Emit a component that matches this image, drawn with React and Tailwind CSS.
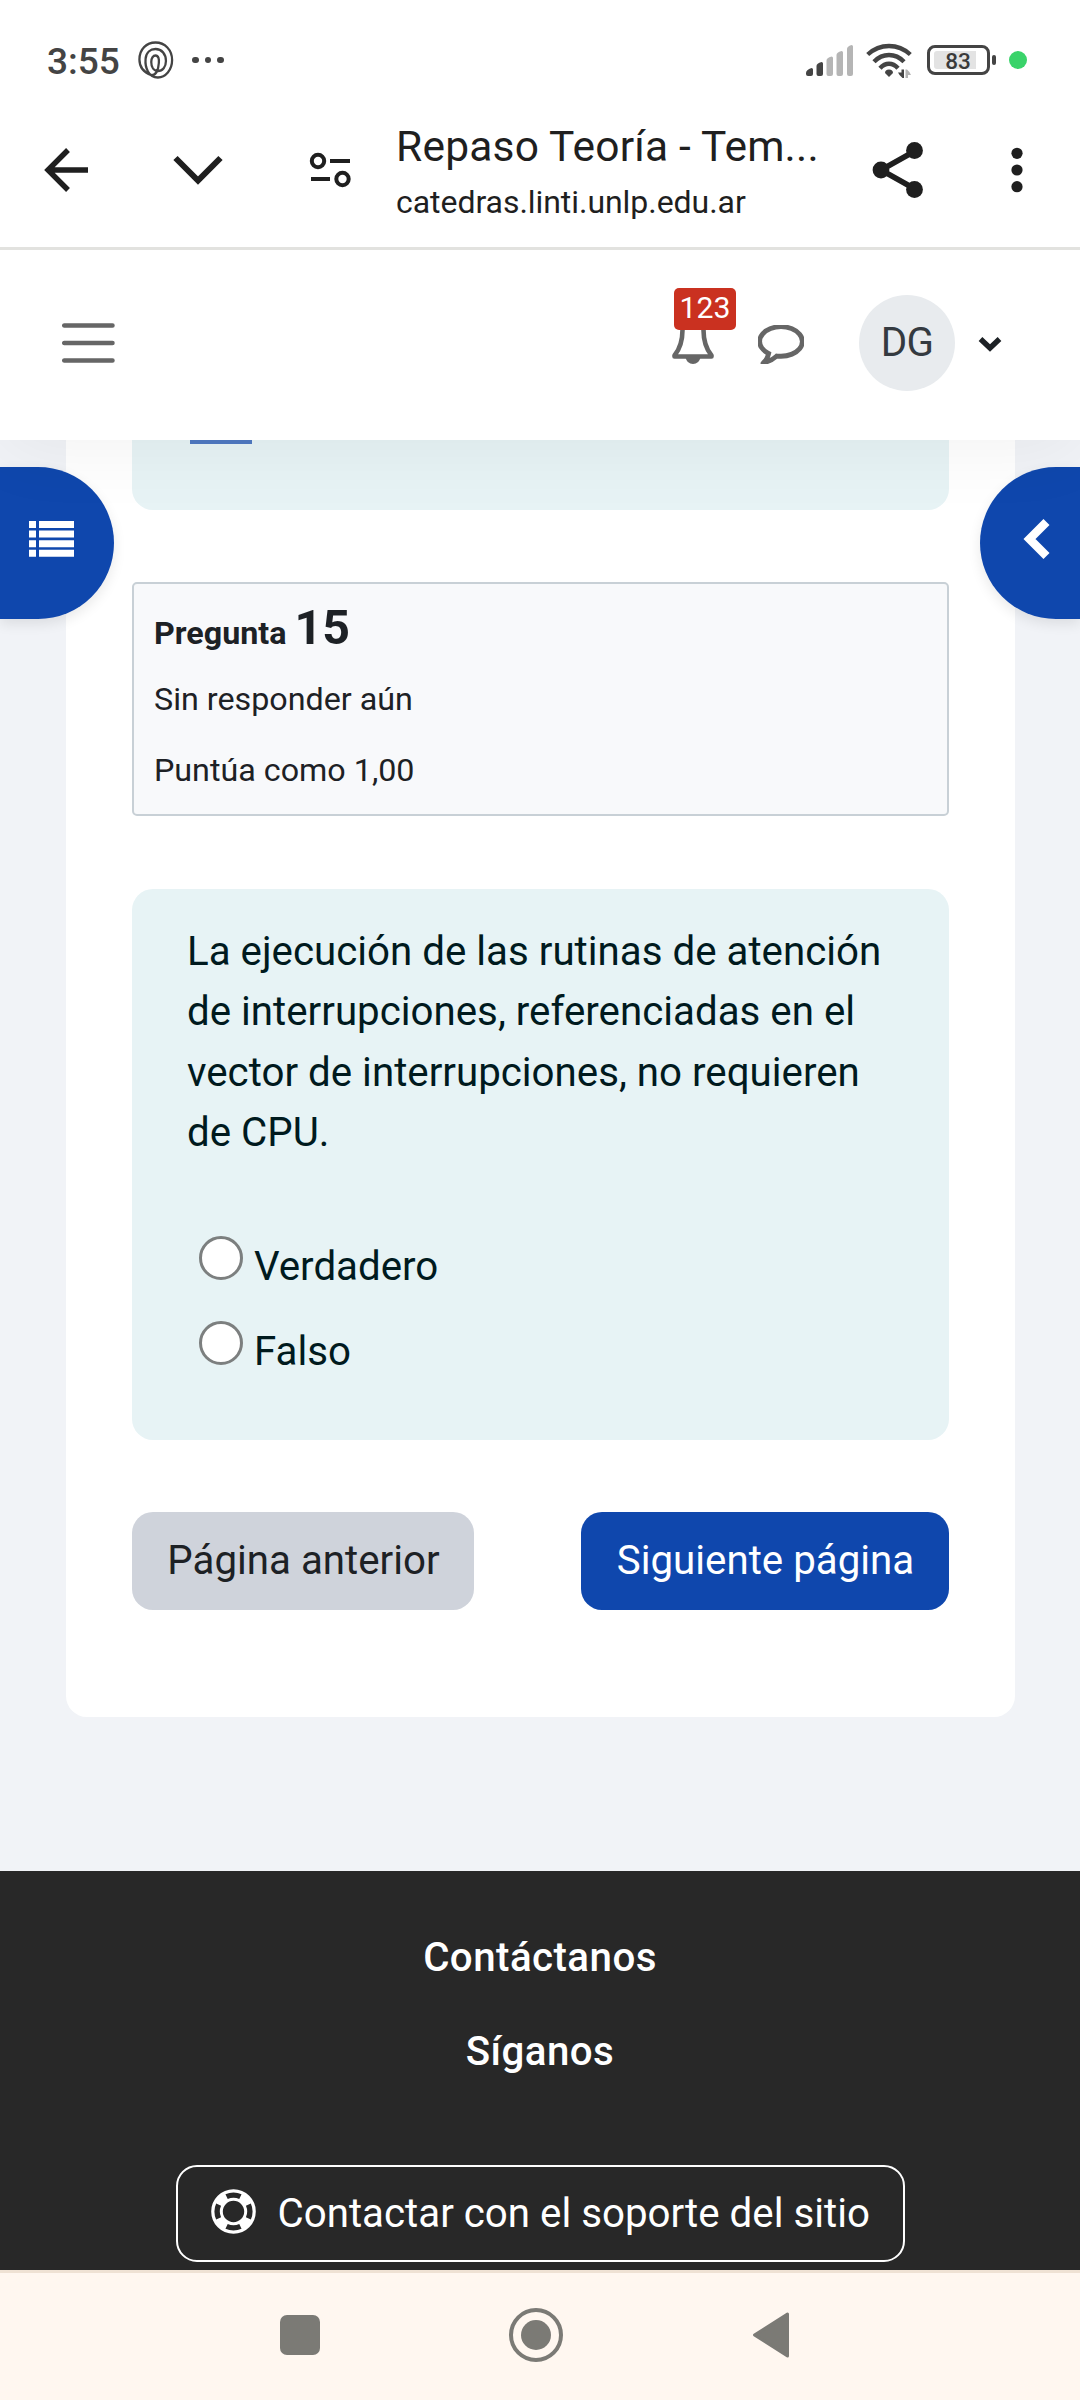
import React from "react";

function StatusBar() {
  return (
    <div className="flex h-[122px] items-center justify-between bg-white pl-[47px] pr-[53px] text-[#444]">
      <div className="flex items-center">
        <span className="w-[91px] whitespace-nowrap pt-[2px] text-[37px] font-medium leading-[44px]">3:55</span>
        <svg className="mt-[-2px] h-[38px] w-[36px]" viewBox="0 0 38 38" preserveAspectRatio="none" fill="none" stroke="#444" strokeWidth="2.4">
          <path d="M14 34C5 31 1.500 25 1.500 18.500C1.500 8 9 1.500 18.500 1.500C28.500 1.500 36 9 36 19C36 29 29 36.500 21 36.500C16 36.500 12.500 34 10.500 30.500C8.500 27 7.500 23 8 18C8.500 11.500 13 8 18.500 8C25 8 29.500 13 29.500 20C29.500 26 26 30 21 30C16.500 30 14 26 14 21C14 17 16 14.500 18.500 14.500C21.500 14.500 22.500 18 22 22C21.500 29 19 35 13.500 34Z" />
        </svg>
        <div className="ml-[18px] mt-[-2px] flex gap-[6px]">
          <i className="size-[6.500px] rounded-full bg-[#444]" />
          <i className="size-[6.500px] rounded-full bg-[#444]" />
          <i className="size-[6.500px] rounded-full bg-[#444]" />
        </div>
      </div>
      <div className="mt-[-2px] flex items-center">
        <svg className="h-[31px] w-[48px]" viewBox="0 0 48 31">
          <path fill="#444" d="M0 28q0-3 5.500-5q1.500 0 1.500 1.500v4.500q0 2-2 2H2q-2 0-2-2zM10.500 21q0-2.500 5-4q1.500 0 1.500 1.500V29q0 2-2 2h-2.500q-2 0-2-2z" />
          <path fill="#b5b5b5" d="M20.500 15.500q0-2.500 5-4q1.500 0 1.500 1.500V29q0 2-2 2h-2.500q-2 0-2-2zM30.500 10q0-2.500 5-4q1.500 0 1.500 1.500V29q0 2-2 2h-2.500q-2 0-2-2zM41 4q0-2.500 4.500-4q1.500 0 1.500 1.500V29q0 2-2 2H43q-2 0-2-2z" />
        </svg>
        <svg className="ml-[12px] mt-[1px] h-[35px] w-[47px]" viewBox="0 0 47 35">
          <g fill="none" stroke="#444" strokeWidth="4.400">
            <path d="M1.700 11.500Q11 3 23 3Q35 3 44.300 11.500" />
            <path d="M8 18.700Q14.500 12 23 12Q31.500 12 38 18.700" />
            <path d="M14 25.200Q18 20.700 23 20.700Q28 20.700 32 25.200" />
          </g>
          <path fill="#444" d="M19 30q0-3.500 4-3.500t4 3.500l-4 4z" />
          <path fill="#444" d="M35.500 26.500h2.500V35h-1.500q-3.500-3-4.500-5.500h3.500z" />
          <path fill="#b5b5b5" d="M39.500 26.500h1.500q3 2.500 4 5.500h-3v3h-2.500z" />
        </svg>
        <div className="ml-[14px] flex h-[30px] w-[63px] items-center rounded-[8px] border-[3px] border-[#444] pl-[3.500px]">
          <span className="h-[18px] w-[42px] rounded-l-[3px] bg-[#e3e3e3] text-center text-[22.500px] font-medium leading-[20px] text-[#3a3a3a]">
            <span className="ml-[7px]">83</span>
          </span>
        </div>
        <i className="ml-[2px] h-[10px] w-[4px] rounded-[2px] bg-[#444]" />
        <i className="ml-[13px] size-[18px] rounded-full bg-[#3ad36a]" />
      </div>
    </div>
  );
}

function BrowserBar() {
  return (
    <div className="relative z-30 flex h-[128px] items-center border-b-[3px] border-[#e2e2df] bg-white pl-[44px] text-[#1f1f1f]">
      <svg className="mt-[-29px] h-[46px] w-[46px]" viewBox="0 0 46 46" fill="none" stroke="#1f1f1f" strokeWidth="5.400">
        <path d="M44 23H5M24 3L4 23L24 43" />
      </svg>
      <svg className="ml-[83px] mt-[-29px] h-[34px] w-[50px]" viewBox="0 0 50 34" fill="none" stroke="#1f1f1f" strokeWidth="6">
        <path d="M2.500 5L25 27.500L47.500 5" />
      </svg>
      <svg className="ml-[85px] mt-[-29px] h-[38px] w-[44px]" viewBox="0 0 44 38" fill="none" stroke="#1f1f1f" strokeWidth="4">
        <circle cx="10" cy="10" r="6.200" />
        <path d="M22 10h20M3 28h19" />
        <circle cx="34.500" cy="28" r="6.200" />
      </svg>
      <div className="ml-[44px] mt-[-22px] w-[434px] whitespace-nowrap">
        <div className="text-[42.500px] leading-[52px] tracking-[0.200px]">Repaso Teoría - Tem...</div>
        <div className="mt-[5px] text-[32px] leading-[48px] tracking-[-0.050px]">catedras.linti.unlp.edu.ar</div>
      </div>
      <svg className="ml-[41px] mt-[-29px] h-[56px] w-[54px]" viewBox="0 0 54 56" fill="#1f1f1f">
        <path d="M44 9L10 28L44 47" fill="none" stroke="#1f1f1f" strokeWidth="5.500" />
        <circle cx="10" cy="28" r="8.400" />
        <circle cx="43.500" cy="8.500" r="8.400" />
        <circle cx="43.500" cy="47.500" r="8.400" />
      </svg>
      <svg className="ml-[86px] mt-[-29px] h-[46px] w-[12px]" viewBox="0 0 12 46" fill="#1f1f1f">
        <circle cx="6" cy="6.300" r="5.600" />
        <circle cx="6" cy="23" r="5.600" />
        <circle cx="6" cy="39.700" r="5.600" />
      </svg>
    </div>
  );
}

function SiteHeader() {
  return (
    <header className="relative z-20 flex h-[190px] items-center bg-white pb-[4px] pl-[62px] shadow-[0_10px_75px_rgba(0,0,0,0.055)]">
      <svg className="h-[42px] w-[53px]" viewBox="0 0 53 42" stroke="#666" strokeWidth="4.500" strokeLinecap="round">
        <path d="M2.200 3.500h48.300M2.200 21h48.300M2.200 38.500h48.300" />
      </svg>
      <div className="relative ml-[557px] h-[42px] w-[42px]">
        <svg className="h-[42px] w-[42px]" viewBox="0 0 42 42" fill="none" stroke="#666" strokeWidth="4.600" strokeLinejoin="round">
          <path d="M10.500 4V8C10.500 21 7 28 2.500 33.500V34.500H39.500V33.500C35 28 31.500 21 31.500 8V4" />
          <path d="M13.500 35.500h15q-1.500 6.500-7.500 6.500t-7.500-6.500z" fill="#666" stroke="none" />
        </svg>
        <span className="absolute left-[2px] top-[-34px] h-[42px] w-[62px] rounded-[5px] bg-[#ca3120] text-center text-[30.200px] leading-[40px] text-white">123</span>
      </div>
      <svg className="ml-[44px] mt-[3px] h-[39.500px] w-[46px]" viewBox="0 256 1792 1536" fill="#666">
        <path d="M896 384q-204 0-381.500 69.500T232.500 641 128 896q0 112 71.500 213.500T401 1285l87 50-27 96q-24 91-70 172 152-63 275-171l43-38 57 6q69 8 130 8 204 0 381.500-69.500t282-187.500T1664 896t-104.500-255-282-187.500T896 384zm896 512q0 174-120 321.500t-326 233-450 85.500q-70 0-145-8-198 175-460 242-49 14-114 22h-5q-15 0-27-10.500t-16-27.500v-1q-3-4-.5-12t2-10 4.500-9.500l6-9 7-8.500 8-9q7-8 31-34.500t34.500-38 31-39.500 32.500-51 27-59 26-76q-157-89-247.500-220T0 896q0-174 120-321.500t326-233T896 256t450 85.500 326 233T1792 896z" stroke="#666" strokeWidth="60" />
      </svg>
      <div className="ml-[55px] flex size-[96px] items-center justify-center rounded-full bg-[#e8ebee] text-[40.300px] text-[#343a40]">
        <span className="tracking-[-0.800px]">DG</span>
      </div>
      <svg className="ml-[23px] mt-[1px] h-[16px] w-[24px]" viewBox="0 0 24 16" fill="none" stroke="#1d2125" strokeWidth="5.400">
        <path d="M2.500 3L12 12L21.500 3" />
      </svg>
    </header>
  );
}

function QuestionInfo() {
  return (
    <div className="mt-[72px] h-[234px] rounded-[5px] border-2 border-[#c8d0d6] bg-[#f8f9fb] px-[20px] pt-[14px] text-[32.250px] text-[#1d2125]">
      <h3 className="flex h-[60px] items-baseline gap-[8px] font-bold leading-[60px]">
        Pregunta <span className="text-[48.300px]">15</span>
      </h3>
      <p className="mt-[17px] leading-[48px]">Sin responder aún</p>
      <p className="mt-[23px] leading-[48px]">Puntúa como 1,00</p>
    </div>
  );
}

function Option({ label }) {
  return (
    <label className="flex h-[85px] items-start">
      <i className="mt-px size-[44px] rounded-full border-[3px] border-[#7c7f7f] bg-white" />
      <span className="ml-[11px] mt-[2px] leading-[60px]">{label}</span>
    </label>
  );
}

function Question() {
  return (
    <div className="mt-[73px] h-[551px] rounded-[21px] bg-[#e7f3f5] pl-[55px] pr-[50px] pt-[33px] text-[40.270px] text-[#001a1e]">
      <p className="leading-[60.400px]">
        La ejecución de las rutinas de atención de interrupciones, referenciadas en el vector de interrupciones, no requieren de CPU.
      </p>
      <div className="ml-[12px] mt-[71px]">
        <Option label="Verdadero" />
        <Option label="Falso" />
      </div>
    </div>
  );
}

function LifeRing() {
  return (
    <svg className="mt-[-5px] size-[45px]" viewBox="0 0 45 45" fill="none">
      <circle cx="22.500" cy="22.500" r="16.500" stroke="#fff" strokeWidth="11.600" />
      <circle cx="22.500" cy="22.500" r="16.400" stroke="#282828" strokeWidth="5.400" pathLength="360" strokeDasharray="50 40" strokeDashoffset="25" />
    </svg>
  );
}

function Footer() {
  return (
    <footer className="mt-[154px] flex h-[399px] flex-col items-center bg-[#282828] pt-[57px] text-[40.270px] text-white">
      <h4 className="font-medium leading-[60px] tracking-[0.450px]">Contáctanos</h4>
      <h4 className="mt-[34px] font-medium leading-[60px] tracking-[0.450px]">Síganos</h4>
      <div className="mt-[83px] flex h-[97px] w-[729px] items-center rounded-[21px] border-2 border-white pl-[33px]">
        <LifeRing />
        <span className="ml-[22px] whitespace-nowrap leading-[60px]">Contactar con el soporte del sitio</span>
      </div>
    </footer>
  );
}

function SystemNav() {
  return (
    <nav className="flex h-[130px] items-center border-t-[3px] border-[#efe2d4] bg-[#fff7f0] pl-[280px]">
      <i className="mt-[-3px] size-[40px] rounded-[7px] bg-[#7b7a75]" />
      <div className="ml-[189px] mt-[-3px] flex size-[54px] items-center justify-center rounded-full border-[4px] border-[#7b7a75]">
        <i className="size-[30px] rounded-full bg-[#7b7a75]" />
      </div>
      <svg className="ml-[189px] mt-[-3px] h-[46px] w-[38px]" viewBox="0 0 38 46" fill="#7b7a75" stroke="#7b7a75" strokeWidth="3" strokeLinejoin="round">
        <path d="M2.500 23L35.500 2v42z" />
      </svg>
    </nav>
  );
}

export default function App() {
  return (
    <div className="h-[2400px] w-[1080px] overflow-hidden bg-white font-['Roboto',sans-serif]">
      <StatusBar />
      <BrowserBar />
      <SiteHeader />
      <main className="relative h-[1830px] overflow-hidden bg-[#f1f3f7]">
        <div className="ml-[66px] h-[1277px] w-[949px] rounded-b-[21px] bg-white px-[66px]">
          <div className="h-[70px] rounded-b-[21px] bg-[#e7f3f5] pl-[58px]">
            <div className="h-[4px] w-[62px] bg-[#4f79c2]" />
          </div>
          <QuestionInfo />
          <Question />
          <div className="mt-[72px] flex justify-between text-[40.270px]">
            <button className="h-[98px] w-[342px] rounded-[21px] bg-[#cfd3db] pl-[1px] pt-[1px] text-[#1d2125]">Página anterior</button>
            <button className="h-[98px] w-[368px] rounded-[21px] bg-[#0f47ad] pl-[1px] pt-[1px] text-white">Siguiente página</button>
          </div>
        </div>
        <button className="absolute left-0 top-[27px] h-[152px] w-[114px] rounded-r-[76px] bg-[#0f47ad] pl-[29px] shadow-[0_5px_13px_rgba(0,0,0,0.09)]">
          <svg className="mt-[-8px] h-[36px] w-[45px]" viewBox="0 0 45 36" fill="#fff">
            <path d="M0 0h7v7H0zM10 0h35v7H10zM0 9.600h7v7H0zM10 9.600h35v7H10zM0 19.200h7v7H0zM10 19.200h35v7H10zM0 28.800h7v7H0zM10 28.800h35v7H10z" />
          </svg>
        </button>
        <button className="absolute right-0 top-[27px] h-[152px] w-[100px] rounded-l-[76px] bg-[#0f47ad] pl-[43px] shadow-[0_5px_13px_rgba(0,0,0,0.09)]">
          <svg className="mt-[-8px] h-[42px] w-[27px]" viewBox="0 0 27 42" fill="none" stroke="#fff" strokeWidth="8.500">
            <path d="M23.500 4L6.500 21L23.500 38" />
          </svg>
        </button>
        <Footer />
      </main>
      <SystemNav />
    </div>
  );
}
